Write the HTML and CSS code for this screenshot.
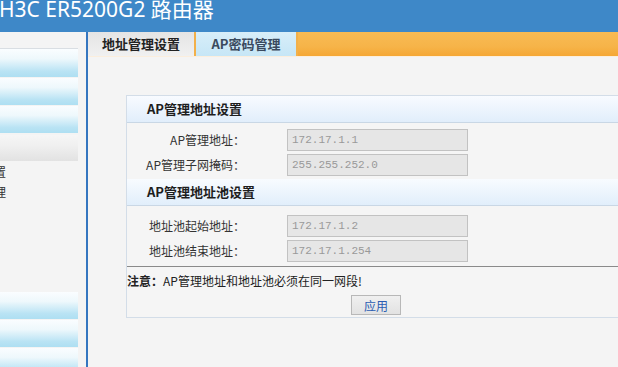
FILE: index.html
```html
<!DOCTYPE html>
<html lang="zh-CN">
<head>
    <meta charset="UTF-8">
    <title>H3C ER5200G2 路由器</title>
    <link rel="stylesheet" href="styles.css">
</head>
<body>
    <div class="top">
        <div class="title">H3C ER5200G2 路由器</div>
    </div>
    <div class="frame">
        <div class="side">
            <div class="menu-item first"></div>
            <div class="menu-item"></div>
            <div class="menu-item"></div>
            <div class="menu-item open"></div>
            <div class="sub-item"><span>地址设置</span></div>
            <div class="sub-item"><span>密码管理</span></div>
            <div class="side-gap"></div>
            <div class="menu-item"></div>
            <div class="menu-item"></div>
            <div class="menu-item"></div>
        </div>
        <div class="main">
            <div class="tabs">
                <div class="tab current">地址管理设置</div>
                <div class="tab">AP密码管理</div>
            </div>
            <div class="content">
                <div class="panel">
                    <div class="panel-head">AP管理地址设置</div>
                    <div class="section">
                        <div class="row">
                            <label class="label">AP管理地址：</label>
                            <input class="field" type="text" value="172.17.1.1" disabled>
                        </div>
                        <div class="row">
                            <label class="label">AP管理子网掩码：</label>
                            <input class="field" type="text" value="255.255.252.0" disabled>
                        </div>
                    </div>
                    <div class="panel-head">AP管理地址池设置</div>
                    <div class="section second">
                        <div class="row">
                            <label class="label">地址池起始地址：</label>
                            <input class="field" type="text" value="172.17.1.2" disabled>
                        </div>
                        <div class="row">
                            <label class="label">地址池结束地址：</label>
                            <input class="field" type="text" value="172.17.1.254" disabled>
                        </div>
                    </div>
                    <div class="note"><b>注意：</b>AP管理地址和地址池必须在同一网段!</div>
                    <div class="actions">
                        <button class="btn" type="button">应用</button>
                    </div>
                </div>
            </div>
        </div>
    </div>
</body>
</html>
```

FILE: styles.css
```css
:root {
    --blue: #3e88c8;
    --line: #3576c0;
    --bg: #f4f4f4;
    --text: #222;
    --panel-border: #d3dde8;
}

* {
    margin: 0;
    padding: 0;
    box-sizing: border-box;
}

body {
    font-family: "Noto Sans", "Noto Sans CJK SC", sans-serif;
    font-size: 12px;
    color: var(--text);
    background: var(--bg);
    width: 618px;
    height: 367px;
    overflow: hidden;
}

.top {
    height: 32px;
    background: var(--blue);
    overflow: hidden;
}

.title {
    color: #fff;
    font-size: 21px;
    line-height: 21px;
    margin: -1px 0 0 -1px;
    white-space: nowrap;
}

.frame {
    display: flex;
    height: 335px;
}

.side {
    width: 88px;
    flex-shrink: 0;
    border-right: 2px solid var(--line);
    padding: 16px 8px 0 0;
    background: var(--bg);
    overflow: hidden;
}

.menu-item {
    height: 28px;
    background: linear-gradient(#fafdff 0%, #eef8fc 35%, #b9e3f4 80%, #aedff2 100%);
    border-bottom: 1px solid #f4f4f4;
}

.menu-item.first {
    border-top: 1px solid #d9dee3;
    height: 30px;
}

.menu-item.open {
    height: 27px;
    margin-top: 1px;
    background: linear-gradient(#f6f6f6 0%, #f0f0f0 40%, #e2e2e2 100%);
}

.sub-item {
    height: 20px;
    line-height: 20px;
    font-family: "Noto Sans CJK SC", sans-serif;
    font-size: 12px;
    color: #333;
    white-space: nowrap;
    margin-left: -42px;
}

.side-gap {
    height: 90px;
}

.main {
    flex: 1;
    min-width: 0;
    overflow: hidden;
}

.tabs {
    height: 25px;
    display: flex;
    background: linear-gradient(#f8bb54 0%, #f6b449 60%, #f5a735 100%);
    border-bottom: 1px solid #fbeedd;
}

.tab {
    height: 24px;
    line-height: 24px;
    font-family: "Noto Sans CJK SC", sans-serif;
    font-size: 13px;
    font-weight: bold;
    text-align: center;
    border-right: 2px solid #f2b04a;
}

.tab.current {
    width: 108px;
    color: #222;
    background: linear-gradient(#e4e4e4, #f0f0f0);
}

.tab:not(.current) {
    width: 102px;
    color: #3a4a5e;
    background: linear-gradient(#d8eef9, #c6e6f6);
}

.content {
    width: 540px;
    padding: 38px 0 0 38px;
}

.panel {
    width: 500px;
    border: 1px solid var(--panel-border);
    background: #f5f5f5;
}

.panel-head {
    height: 27px;
    line-height: 26px;
    padding-left: 20px;
    font-family: "Noto Sans CJK SC", sans-serif;
    font-size: 13px;
    font-weight: bold;
    color: #1e1e1e;
    background: linear-gradient(#f8fbff, #e1eefb);
    border-bottom: 1px solid #c9d7e5;
}

.section {
    padding: 4px 0 2px;
}

.section.second {
    padding: 7px 0 3px;
    border-bottom: 1px solid #8a8a8a;
}

.row {
    display: flex;
    align-items: center;
    height: 25px;
}

.label {
    width: 118px;
    text-align: right;
    font-family: "Noto Sans CJK SC", sans-serif;
    font-size: 12px;
    color: #333;
    white-space: nowrap;
}

.field {
    margin-left: 42px;
    width: 181px;
    height: 22px;
    padding: 0 4px;
    border: 1px solid #c2c2c2;
    background: #e6e6e6;
    color: #999;
    font-family: "Liberation Mono", monospace;
    font-size: 11px;
}

.note {
    height: 28px;
    line-height: 27px;
    font-family: "Noto Sans CJK SC", sans-serif;
    font-size: 12px;
    color: #222;
}

.actions {
    text-align: center;
    padding-bottom: 2px;
}

.btn {
    width: 50px;
    height: 20px;
    border: 1px solid #b8b8b8;
    background: linear-gradient(#f0f0f0, #e2e2e2);
    color: #2a5cb3;
    font-family: "Noto Sans CJK SC", sans-serif;
    font-size: 12px;
    cursor: pointer;
}
```
